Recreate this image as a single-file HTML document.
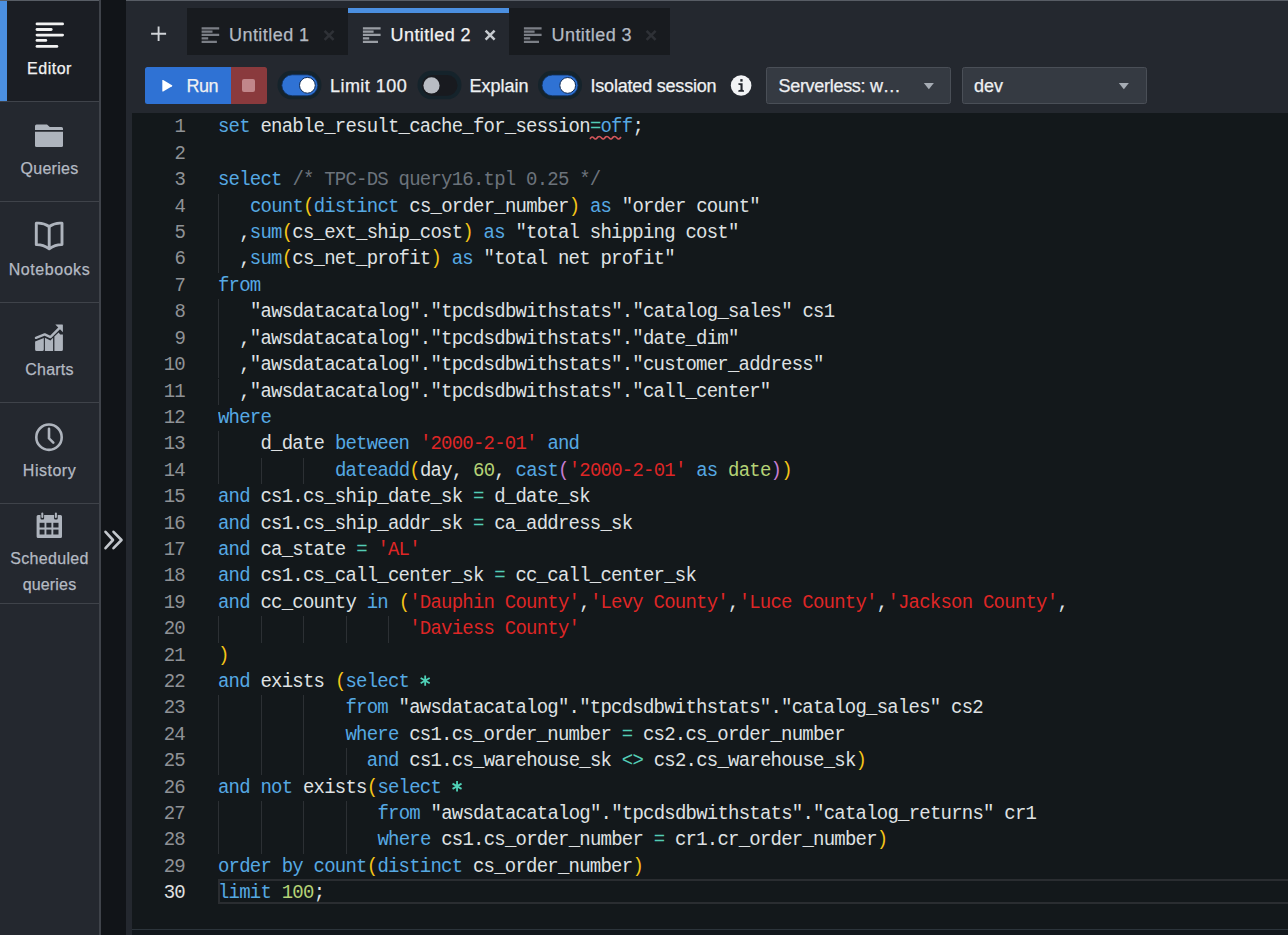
<!DOCTYPE html>
<html><head><meta charset="utf-8">
<style>
*{margin:0;padding:0;box-sizing:border-box}
html,body{width:1288px;height:935px;overflow:hidden;background:#24282f;font-family:"Liberation Sans",sans-serif;position:relative}
.a{position:absolute}
#topline{left:0;top:0;width:1288px;height:1.3px;background:#585d65}
#side{left:0;top:1px;width:99px;height:934px;background:#24282f}
#sideb{left:99px;top:0;width:2px;height:935px;background:#3f434a}
#strip{left:101px;top:0;width:25px;height:935px;background:#111418}
.sep{left:0;width:99px;height:1px;background:#3f434a}
.lbl{left:0;width:99px;text-align:center;color:#b4bac3;font-size:16px;line-height:25px;-webkit-text-stroke:0.25px currentColor}
#active{left:0;top:1px;width:99px;height:100px;background:#1b1e24}
#bar{left:0;top:1px;width:7px;height:100px;background:#4b8fe0}
/* tabs */
.tab{top:8px;height:47px;width:161px;background:#181b1f}
.tabt{top:24px;font-size:18px;line-height:22px;color:#b4bac3;letter-spacing:0.45px;-webkit-text-stroke:0.25px currentColor}
/* editor */
#editor{left:132px;top:113px;width:1156px;height:816px;background:#13181b}
#resz{left:132px;top:929px;width:1156px;height:1px;background:#2c343b}
#below{left:132px;top:930px;width:1156px;height:5px;background:#12171c}
.ln{position:absolute;left:140px;width:45px;text-align:right;height:26px;line-height:26px;transform:scaleY(1.08);transform-origin:0 18px;font-family:"Liberation Mono",monospace;font-size:19px;letter-spacing:-0.777px;color:#8f9296}
.ln.act{color:#e0e0e0}
.cl{position:absolute;height:26px;line-height:26px;transform:scaleY(1.08);transform-origin:0 18px;white-space:pre;font-family:"Liberation Mono",monospace;font-size:19px;letter-spacing:-0.777px;color:#dfe1e3}
.gd{position:absolute;width:1px;height:26.35px;background:#2c3034}
.k{color:#56a9e3}.o{color:#54cdb5}.s{color:#de2626}.n{color:#b5d276}.p1{color:#f5c518}.p2{color:#c77dd2}.c{color:#6c737b}
.tbt{top:75px;font-size:18px;line-height:22px;color:#eef0f2;white-space:pre;-webkit-text-stroke:0.25px currentColor}
.sel{top:66.7px;width:185.3px;height:37.2px;background:#353a42;border:1px solid #4a4f57;border-radius:2.5px}
#actline{left:218px;top:879px;width:1070px;height:25px;border:2px solid #2a2d31;border-right:none}
</style></head><body>
<div class="a" id="topline"></div>
<div class="a" id="side"></div>
<div class="a" id="active"></div>
<div class="a" id="bar"></div>
<div class="a sep" style="top:101px"></div>
<div class="a sep" style="top:201px"></div>
<div class="a sep" style="top:302px"></div>
<div class="a sep" style="top:402px"></div>
<div class="a sep" style="top:503px"></div>
<div class="a sep" style="top:603px"></div>
<div class="a" id="sideb"></div>
<div class="a" id="strip"></div>

<!-- sidebar icons -->
<svg class="a" style="left:0;top:0" width="130" height="610" viewBox="0 0 130 610">
 <g stroke="#f2f2f2" stroke-width="2.8" stroke-linecap="round">
  <line x1="37" y1="23.9" x2="62.6" y2="23.9"/><line x1="37" y1="29.5" x2="51.2" y2="29.5"/><line x1="37" y1="35.1" x2="62.6" y2="35.1"/><line x1="37" y1="40.4" x2="45.8" y2="40.4"/><line x1="37" y1="46.4" x2="56.9" y2="46.4"/>
 </g>
 <g fill="#aeb4bd">
  <path d="M35 126a1.5 1.5 0 0 1 1.5-1.5h10.5l2.8 2.6h11.7a1.5 1.5 0 0 1 1.5 1.5v1.4H35z"/>
  <path d="M35 131.8h28v13.7a1.5 1.5 0 0 1-1.5 1.5h-25a1.5 1.5 0 0 1-1.5-1.5z"/>
 </g>
 <g fill="none" stroke="#aeb4bd" stroke-width="2.9" stroke-linejoin="round">
  <path d="M36.3 223.3Q43 222.5 49.2 226.5Q55.4 222.5 62 223.3V244.6Q55.4 244.4 49.2 248.8Q43 244.4 36.3 244.6Z"/>
  <path d="M49.2 226.5V248.5"/>
 </g>
 <g fill="#aeb4bd">
  <path d="M35.1 341.5L43.8 338V349.4a1.5 1.5 0 0 1-1.5 1.5H36.6a1.5 1.5 0 0 1-1.5-1.5Z"/>
  <path d="M44.9 337.8L50.4 340.4L53.1 337.7V350.9H44.9Z"/>
  <path d="M54.4 336.4L58.6 332.4L60.2 334.5H62.9V349.4a1.5 1.5 0 0 1-1.5 1.5H54.4Z"/>
  <path d="M55.3 324.4H62.3a.6 .6 0 0 1 .6.6V332.2Z"/>
 </g>
 <path d="M36 337.8L44.7 334.4L50.4 337.1L59.6 327.9" fill="none" stroke="#aeb4bd" stroke-width="2.5" stroke-linejoin="round" stroke-linecap="round"/>
 <g fill="none" stroke="#aeb4bd" stroke-width="2.6" stroke-linecap="round">
  <circle cx="49" cy="437.2" r="12.7"/>
  <path d="M49 428.8V438.3L53.3 442.6"/>
 </g>
 <g fill="#aeb4bd">
  <path d="M36.6 516.5a1.5 1.5 0 0 1 1.5-1.5H60.5a1.5 1.5 0 0 1 1.5 1.5V536.5a1.5 1.5 0 0 1-1.5 1.5H38.1a1.5 1.5 0 0 1-1.5-1.5z"/>
 </g>
 <g fill="#24282f">
  <rect x="39.6" y="522.8" width="4.9" height="4.7"/><rect x="46.4" y="522.8" width="5" height="4.7"/><rect x="53.3" y="522.8" width="5.2" height="4.7"/>
  <rect x="39.6" y="529.6" width="4.9" height="4.9"/><rect x="46.4" y="529.6" width="5" height="4.9"/><rect x="53.3" y="529.6" width="5.2" height="4.9"/>
  <rect x="40.5" y="514.5" width="3.6" height="5" rx="1"/><rect x="54.1" y="514.5" width="3.6" height="5" rx="1"/>
 </g>
 <g fill="#aeb4bd">
  <rect x="41.3" y="512.6" width="2" height="5.4" rx="1"/><rect x="54.9" y="512.6" width="2" height="5.4" rx="1"/>
 </g>
 <g fill="none" stroke="#c3c7cd" stroke-width="2.6" stroke-linecap="round" stroke-linejoin="round">
  <path d="M105.5 531.8L113 540L105.5 548.2M113.5 531.8L121.5 540L113.5 548.2"/>
 </g>
</svg>
<div class="a lbl" style="top:56px;color:#f2f2f2;letter-spacing:0.5px">Editor</div>
<div class="a lbl" style="top:156px;letter-spacing:0.25px">Queries</div>
<div class="a lbl" style="top:257px;letter-spacing:0.55px">Notebooks</div>
<div class="a lbl" style="top:357px;letter-spacing:0.2px">Charts</div>
<div class="a lbl" style="top:458px;letter-spacing:0.5px">History</div>
<div class="a lbl" style="top:546px;letter-spacing:0.3px">Scheduled</div>
<div class="a lbl" style="top:571.5px;letter-spacing:0.17px">queries</div>

<!-- tabs -->
<div class="a tab" style="left:187px"></div>
<div class="a tab" style="left:348px;background:#24282f"></div>
<div class="a" style="left:348px;top:8px;width:161px;height:4.5px;background:#4b8fe0"></div>
<div class="a tab" style="left:509px"></div>
<svg class="a" style="left:0;top:0" width="700" height="60" viewBox="0 0 700 60">
 <g stroke="#d0d3d8" stroke-width="1.9"><path d="M158.6 26.4V41.1M151.1 33.75H166.1"/></g>
 <g stroke="#7b7f86" stroke-width="2.3">
  <path d="M201.6 28.4H219.2M201.6 31.6H212.5M201.6 34.9H219.2M201.6 38.3H208.2M201.6 41.8H216.9"/>
 </g>
 <g stroke="#9a9ea5" stroke-width="2.3">
  <path d="M362.9 28.4H380.6M362.9 31.6H373.6M362.9 34.9H380.6M362.9 38.3H369.2M362.9 41.8H378"/>
 </g>
 <g stroke="#7b7f86" stroke-width="2.3">
  <path d="M523.9 28.4H541.6M523.9 31.6H534.6M523.9 34.9H541.6M523.9 38.3H530.2M523.9 41.8H539"/>
 </g>
 <g stroke="#2e3136" stroke-width="2.6"><path d="M324.6 30.8L333.6 39.8M333.6 30.8L324.6 39.8"/></g>
 <g stroke="#c6cacf" stroke-width="2.5"><path d="M485.6 30.7L494.6 39.7M494.6 30.7L485.6 39.7"/></g>
 <g stroke="#2e3136" stroke-width="2.6"><path d="M646.6 30.8L655.6 39.8M655.6 30.8L646.6 39.8"/></g>
</svg>
<div class="a tabt" style="left:229px">Untitled 1</div>
<div class="a tabt" style="left:390.5px;color:#f2f2f2">Untitled 2</div>
<div class="a tabt" style="left:551.5px">Untitled 3</div>

<!-- toolbar -->
<div class="a" style="left:145px;top:67px;width:86px;height:37px;background:#2f72d4;border-radius:2.5px 0 0 2.5px"></div>
<div class="a" style="left:231px;top:67px;width:36px;height:37px;background:#8a3a3d;border-radius:0 2.5px 2.5px 0"></div>
<div class="a" style="left:242px;top:79px;width:13px;height:12.8px;background:#c1868a;border-radius:2px"></div>
<svg class="a" style="left:0;top:60px" width="1160" height="50" viewBox="0 60 1160 50">
 <path d="M162.3 80.6Q162.3 79.6 163.2 80.1L172 85.2Q172.8 85.8 172 86.3L163.2 91.4Q162.3 91.9 162.3 90.9Z" fill="#ffffff"/>
 <!-- toggle rings -->
 <rect x="277.5" y="70.8" width="44" height="28.5" rx="14.2" fill="#15232b"/>
 <rect x="281.8" y="74.8" width="35.9" height="21" rx="10.5" fill="#2f72d4" stroke="#10305e" stroke-width="0.8"/>
 <circle cx="307.4" cy="85.3" r="7.9" fill="#ffffff" stroke="#0d2a55" stroke-width="1"/>
 <rect x="417.5" y="70.8" width="44" height="28.5" rx="14.2" fill="#15232b"/>
 <rect x="421.7" y="75" width="35.8" height="20.8" rx="10.4" fill="#181a1f"/>
 <circle cx="431.5" cy="85.4" r="8.1" fill="#b8bcc3"/>
 <rect x="538" y="70.8" width="44" height="28.5" rx="14.2" fill="#15232b"/>
 <rect x="542" y="75" width="36" height="20.8" rx="10.4" fill="#2f72d4" stroke="#10305e" stroke-width="0.8"/>
 <circle cx="567.7" cy="85.4" r="7.9" fill="#ffffff" stroke="#0d2a55" stroke-width="1"/>
 <!-- info -->
 <circle cx="741.1" cy="85.5" r="10.3" fill="#f2f3f5"/>
 <g fill="#22262d">
  <rect x="740.3" y="79.1" width="2.3" height="2.5"/>
  <path d="M738.4 83.3H742.6V89.8Q743 90.2 744 90.4V91.8H738.3V90.4Q739.3 90.2 740.5 89.8V85.3Q740.2 84.8 738.4 84.7Z"/>
 </g>
</svg>
<div class="a tbt" style="left:186.5px;letter-spacing:-0.5px">Run</div>
<div class="a tbt" style="left:330px;letter-spacing:0.45px">Limit 100</div>
<div class="a tbt" style="left:469.5px">Explain</div>
<div class="a tbt" style="left:590.5px;letter-spacing:-0.2px">Isolated session</div>
<div class="a sel" style="left:766px"></div>
<div class="a sel" style="left:961.5px"></div>
<div class="a tbt" style="left:778.5px;letter-spacing:-0.3px">Serverless: w…</div>
<div class="a tbt" style="left:974px">dev</div>
<svg class="a" style="left:0;top:60px" width="1160" height="50" viewBox="0 60 1160 50">
 <!-- carets -->
 <path d="M923.8 83H933.9L928.85 89.2Z" fill="#a6acb4"/>
 <path d="M1118.8 83H1128.9L1123.85 89.2Z" fill="#a6acb4"/>
</svg>

<!-- editor -->
<div class="a" id="editor"></div>
<div class="a" id="actline"></div>
<div class="a" id="resz"></div>
<div class="a" id="below"></div>
<div class="ln" style="top:114.40px">1</div>
<div class="cl" style="left:218.0px;top:114.40px"><span class="k">set</span> enable_result_cache_for_session<span class="o">=</span><span class="k">off</span>;</div>
<div class="ln" style="top:140.81px">2</div>
<div class="ln" style="top:167.22px">3</div>
<div class="cl" style="left:218.0px;top:167.22px"><span class="k">select</span> <span class="c">/* TPC-DS query16.tpl 0.25 */</span></div>
<div class="ln" style="top:193.63px">4</div>
<div class="gd" style="left:218.0px;top:193.63px"></div>
<div class="cl" style="left:249.9px;top:193.63px"><span class="k">count</span><span class="p1">(</span><span class="k">distinct</span> cs_order_number<span class="p1">)</span> <span class="k">as</span> &quot;order count&quot;</div>
<div class="ln" style="top:220.04px">5</div>
<div class="gd" style="left:218.0px;top:220.04px"></div>
<div class="cl" style="left:239.2px;top:220.04px">,<span class="k">sum</span><span class="p1">(</span>cs_ext_ship_cost<span class="p1">)</span> <span class="k">as</span> &quot;total shipping cost&quot;</div>
<div class="ln" style="top:246.45px">6</div>
<div class="gd" style="left:218.0px;top:246.45px"></div>
<div class="cl" style="left:239.2px;top:246.45px">,<span class="k">sum</span><span class="p1">(</span>cs_net_profit<span class="p1">)</span> <span class="k">as</span> &quot;total net profit&quot;</div>
<div class="ln" style="top:272.86px">7</div>
<div class="cl" style="left:218.0px;top:272.86px"><span class="k">from</span></div>
<div class="ln" style="top:299.27px">8</div>
<div class="gd" style="left:218.0px;top:299.27px"></div>
<div class="cl" style="left:249.9px;top:299.27px">&quot;awsdatacatalog&quot;.&quot;tpcdsdbwithstats&quot;.&quot;catalog_sales&quot; cs1</div>
<div class="ln" style="top:325.68px">9</div>
<div class="gd" style="left:218.0px;top:325.68px"></div>
<div class="cl" style="left:239.2px;top:325.68px">,&quot;awsdatacatalog&quot;.&quot;tpcdsdbwithstats&quot;.&quot;date_dim&quot;</div>
<div class="ln" style="top:352.09px">10</div>
<div class="gd" style="left:218.0px;top:352.09px"></div>
<div class="cl" style="left:239.2px;top:352.09px">,&quot;awsdatacatalog&quot;.&quot;tpcdsdbwithstats&quot;.&quot;customer_address&quot;</div>
<div class="ln" style="top:378.50px">11</div>
<div class="gd" style="left:218.0px;top:378.50px"></div>
<div class="cl" style="left:239.2px;top:378.50px">,&quot;awsdatacatalog&quot;.&quot;tpcdsdbwithstats&quot;.&quot;call_center&quot;</div>
<div class="ln" style="top:404.91px">12</div>
<div class="cl" style="left:218.0px;top:404.91px"><span class="k">where</span></div>
<div class="ln" style="top:431.32px">13</div>
<div class="gd" style="left:218.0px;top:431.32px"></div>
<div class="cl" style="left:260.5px;top:431.32px">d_date <span class="k">between</span> <span class="s">&#x27;2000-2-01&#x27;</span> <span class="k">and</span></div>
<div class="ln" style="top:457.73px">14</div>
<div class="gd" style="left:218.0px;top:457.73px"></div>
<div class="gd" style="left:260.5px;top:457.73px"></div>
<div class="gd" style="left:303.0px;top:457.73px"></div>
<div class="cl" style="left:334.9px;top:457.73px"><span class="k">dateadd</span><span class="p1">(</span>day, <span class="n">60</span>, <span class="k">cast</span><span class="p2">(</span><span class="s">&#x27;2000-2-01&#x27;</span> <span class="k">as</span> <span class="n">date</span><span class="p2">)</span><span class="p1">)</span></div>
<div class="ln" style="top:484.14px">15</div>
<div class="cl" style="left:218.0px;top:484.14px"><span class="k">and</span> cs1.cs_ship_date_sk <span class="o">=</span> d_date_sk</div>
<div class="ln" style="top:510.55px">16</div>
<div class="cl" style="left:218.0px;top:510.55px"><span class="k">and</span> cs1.cs_ship_addr_sk <span class="o">=</span> ca_address_sk</div>
<div class="ln" style="top:536.96px">17</div>
<div class="cl" style="left:218.0px;top:536.96px"><span class="k">and</span> ca_state <span class="o">=</span> <span class="s">&#x27;AL&#x27;</span></div>
<div class="ln" style="top:563.37px">18</div>
<div class="cl" style="left:218.0px;top:563.37px"><span class="k">and</span> cs1.cs_call_center_sk <span class="o">=</span> cc_call_center_sk</div>
<div class="ln" style="top:589.78px">19</div>
<div class="cl" style="left:218.0px;top:589.78px"><span class="k">and</span> cc_county <span class="k">in</span> <span class="p1">(</span><span class="s">&#x27;Dauphin County&#x27;</span>,<span class="s">&#x27;Levy County&#x27;</span>,<span class="s">&#x27;Luce County&#x27;</span>,<span class="s">&#x27;Jackson County&#x27;</span>,</div>
<div class="ln" style="top:616.19px">20</div>
<div class="gd" style="left:218.0px;top:616.19px"></div>
<div class="gd" style="left:260.5px;top:616.19px"></div>
<div class="gd" style="left:303.0px;top:616.19px"></div>
<div class="gd" style="left:345.5px;top:616.19px"></div>
<div class="gd" style="left:388.0px;top:616.19px"></div>
<div class="cl" style="left:409.2px;top:616.19px"><span class="s">&#x27;Daviess County&#x27;</span></div>
<div class="ln" style="top:642.60px">21</div>
<div class="cl" style="left:218.0px;top:642.60px"><span class="p1">)</span></div>
<div class="ln" style="top:669.01px">22</div>
<div class="cl" style="left:218.0px;top:669.01px"><span class="k">and</span> exists <span class="p1">(</span><span class="k">select</span> <span class="o"> </span></div>
<div class="ln" style="top:695.42px">23</div>
<div class="gd" style="left:218.0px;top:695.42px"></div>
<div class="gd" style="left:260.5px;top:695.42px"></div>
<div class="gd" style="left:303.0px;top:695.42px"></div>
<div class="cl" style="left:345.5px;top:695.42px"><span class="k">from</span> &quot;awsdatacatalog&quot;.&quot;tpcdsdbwithstats&quot;.&quot;catalog_sales&quot; cs2</div>
<div class="ln" style="top:721.83px">24</div>
<div class="gd" style="left:218.0px;top:721.83px"></div>
<div class="gd" style="left:260.5px;top:721.83px"></div>
<div class="gd" style="left:303.0px;top:721.83px"></div>
<div class="cl" style="left:345.5px;top:721.83px"><span class="k">where</span> cs1.cs_order_number <span class="o">=</span> cs2.cs_order_number</div>
<div class="ln" style="top:748.24px">25</div>
<div class="gd" style="left:218.0px;top:748.24px"></div>
<div class="gd" style="left:260.5px;top:748.24px"></div>
<div class="gd" style="left:303.0px;top:748.24px"></div>
<div class="gd" style="left:345.5px;top:748.24px"></div>
<div class="cl" style="left:366.8px;top:748.24px"><span class="k">and</span> cs1.cs_warehouse_sk <span class="o">&lt;&gt;</span> cs2.cs_warehouse_sk<span class="p1">)</span></div>
<div class="ln" style="top:774.65px">26</div>
<div class="cl" style="left:218.0px;top:774.65px"><span class="k">and</span> <span class="k">not</span> exists<span class="p1">(</span><span class="k">select</span> <span class="o"> </span></div>
<div class="ln" style="top:801.06px">27</div>
<div class="gd" style="left:218.0px;top:801.06px"></div>
<div class="gd" style="left:260.5px;top:801.06px"></div>
<div class="gd" style="left:303.0px;top:801.06px"></div>
<div class="gd" style="left:345.5px;top:801.06px"></div>
<div class="cl" style="left:377.4px;top:801.06px"><span class="k">from</span> &quot;awsdatacatalog&quot;.&quot;tpcdsdbwithstats&quot;.&quot;catalog_returns&quot; cr1</div>
<div class="ln" style="top:827.47px">28</div>
<div class="gd" style="left:218.0px;top:827.47px"></div>
<div class="gd" style="left:260.5px;top:827.47px"></div>
<div class="gd" style="left:303.0px;top:827.47px"></div>
<div class="gd" style="left:345.5px;top:827.47px"></div>
<div class="cl" style="left:377.4px;top:827.47px"><span class="k">where</span> cs1.cs_order_number <span class="o">=</span> cr1.cr_order_number<span class="p1">)</span></div>
<div class="ln" style="top:853.88px">29</div>
<div class="cl" style="left:218.0px;top:853.88px"><span class="k">order by count</span><span class="p1">(</span><span class="k">distinct</span> cs_order_number<span class="p1">)</span></div>
<div class="ln act" style="top:880.29px">30</div>
<div class="cl" style="left:218.0px;top:880.29px"><span class="k">limit</span> <span class="n">100</span>;</div>
<svg class="a" style="left:0;top:0;position:absolute" width="1288" height="935"><path d="M425.18 675.41L425.18 685.81M420.67 678.01L429.68 683.21M429.68 678.01L420.67 683.21" stroke="#4fd1b7" stroke-width="1.8" fill="none"/></svg>
<svg class="a" style="left:0;top:0;position:absolute" width="1288" height="935"><path d="M457.05 781.05L457.05 791.45M452.55 783.65L461.55 788.85M461.55 783.65L452.55 788.85" stroke="#4fd1b7" stroke-width="1.8" fill="none"/></svg>
<svg class="a" style="left:588px;top:133px" width="36" height="9" viewBox="588 133 36 9"><path d="M590 139Q591.9 135.6 593.9 138Q595.8 140.4 597.8 137Q599.7 135.6 601.6 138Q603.5 140.4 605.5 137Q607.4 135.6 609.3 138Q611.2 140.4 613.2 137Q615.1 135.6 617 138Q618.9 140.4 621 137" fill="none" stroke="#d3565b" stroke-width="1.6"/></svg>

</body></html>
